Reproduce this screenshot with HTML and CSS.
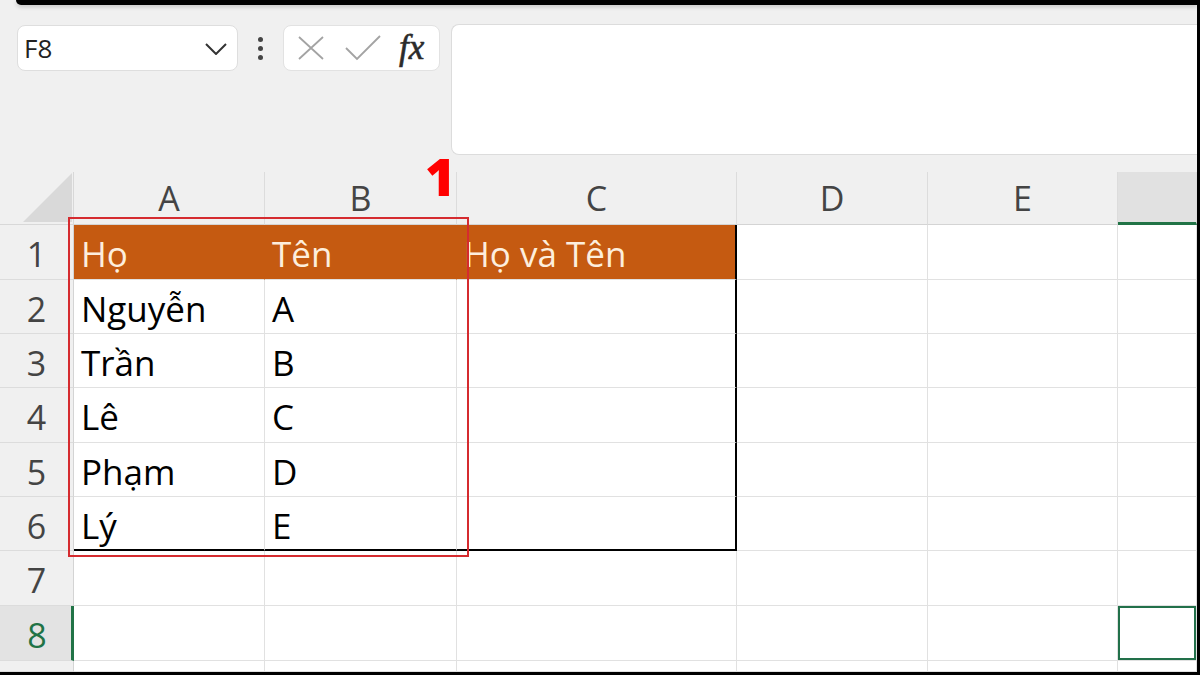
FILE: index.html
```html
<!DOCTYPE html>
<html lang="vi">
<head>
<meta charset="utf-8">
<title>Excel</title>
<link rel="stylesheet" href="styles.css">
</head>
<body>
<div class="frame">
  <div class="topbar"></div>
  <div class="toolbar">
    <div class="namebox">
      <span class="nb-text">F8</span>
      <svg class="chev" width="22" height="12" viewBox="0 0 22 12"><path d="M1 1 L11 11 L21 1" fill="none" stroke="#333" stroke-width="2"/></svg>
    </div>
    <div class="dots"><span></span><span></span><span></span></div>
    <div class="fxbox">
      <svg class="ico" width="28" height="26" viewBox="0 0 28 26"><path d="M2 2 L26 24 M26 2 L2 24" stroke="#a3a3a3" stroke-width="1.8" fill="none"/></svg>
      <svg class="ico" width="36" height="28" viewBox="0 0 36 28"><path d="M1 14 L12 25 L35 2" stroke="#a3a3a3" stroke-width="1.8" fill="none"/></svg>
      <span class="fx">fx</span>
    </div>
    <div class="formula"></div>
  </div>
  <div class="sheet">
    <!-- header row -->
    <div class="corner"><svg width="74" height="53" viewBox="0 0 74 53"><polygon points="23,50 72,50 72,1" fill="#d9d9d9"/></svg></div>
    <div class="ch">A</div><div class="ch">B</div><div class="ch">C</div><div class="ch">D</div><div class="ch">E</div><div class="ch chs"></div>
    <!-- row 1 -->
    <div class="rh">1</div>
    <div class="c hd">Họ</div><div class="c hd">Tên</div><div class="c hd tr">Họ và Tên</div><div class="c"></div><div class="c"></div><div class="c"></div>
    <!-- row 2 -->
    <div class="rh">2</div>
    <div class="c">Nguyễn</div><div class="c">A</div><div class="c tr"></div><div class="c"></div><div class="c"></div><div class="c"></div>
    <!-- row 3 -->
    <div class="rh">3</div>
    <div class="c">Trần</div><div class="c">B</div><div class="c tr"></div><div class="c"></div><div class="c"></div><div class="c"></div>
    <!-- row 4 -->
    <div class="rh">4</div>
    <div class="c">Lê</div><div class="c">C</div><div class="c tr"></div><div class="c"></div><div class="c"></div><div class="c"></div>
    <!-- row 5 -->
    <div class="rh">5</div>
    <div class="c">Phạm</div><div class="c">D</div><div class="c tr"></div><div class="c"></div><div class="c"></div><div class="c"></div>
    <!-- row 6 -->
    <div class="rh">6</div>
    <div class="c tb">Lý</div><div class="c tb">E</div><div class="c tb tr"></div><div class="c"></div><div class="c"></div><div class="c"></div>
    <!-- row 7 -->
    <div class="rh">7</div>
    <div class="c"></div><div class="c"></div><div class="c"></div><div class="c"></div><div class="c"></div><div class="c"></div>
    <!-- row 8 -->
    <div class="rh rhs">8</div>
    <div class="c"></div><div class="c"></div><div class="c"></div><div class="c"></div><div class="c"></div><div class="c sel"></div>
    <!-- row 9 (partial) -->
    <div class="rh"></div>
    <div class="c"></div><div class="c"></div><div class="c"></div><div class="c"></div><div class="c"></div><div class="c"></div>

    <div class="mark-box"></div>
    <div class="mark-num">1</div>
  </div>
</div>
</body>
</html>
```

FILE: styles.css
```css
* { box-sizing: border-box; }
html, body { margin: 0; padding: 0; }
body {
  width: 1200px;
  height: 675px;
  overflow: hidden;
  background: #f0f0f0;
  font-family: "Open Sans", "Noto Sans", sans-serif;
}
.frame {
  width: 1200px;
  height: 675px;
  display: flex;
  flex-direction: column;
  border-right: 3px solid #000;
  border-bottom: 3px solid #000;
  background: #f0f0f0;
}
.topbar {
  height: 5px;
  margin-left: 16px;
  background: #000;
  border-bottom-left-radius: 12px;
  box-shadow: 0 2px 4px rgba(0,0,0,0.18);
  flex: none;
}
.toolbar {
  height: 167px;
  flex: none;
  display: flex;
  align-items: flex-start;
  padding-top: 19px;
  padding-left: 17px;
}
.namebox {
  width: 221px;
  height: 46px;
  margin-top: 1px;
  background: #fff;
  border: 1px solid #dedede;
  border-radius: 8px;
  display: flex;
  align-items: center;
  justify-content: space-between;
  padding: 0 10px 0 6px;
}
.nb-text { font-size: 26px; color: #222; }
.chev { margin-top: 2px; }
.dots {
  width: 45px;
  height: 46px;
  margin-top: 1px;
  display: flex;
  flex-direction: column;
  align-items: center;
  justify-content: center;
  gap: 4px;
}
.dots span { width: 5px; height: 5px; border-radius: 50%; background: #444; }
.fxbox {
  width: 157px;
  height: 46px;
  margin-top: 1px;
  background: #fff;
  border: 1px solid #e2e2e2;
  border-radius: 8px;
  display: flex;
  align-items: center;
  padding-left: 13px;
  gap: 20px;
}
.fxbox .ico { flex: none; }
.fx {
  font-family: "Liberation Serif", "DejaVu Serif", serif;
  font-style: italic;
  font-size: 35px;
  line-height: 40px;
  color: #2b2b2b;
  -webkit-text-stroke: 0.6px #2b2b2b;
  margin-left: -2px;
  margin-top: 0;
}
.formula {
  flex: 1;
  height: 131px;
  margin-left: 11px;
  background: #fff;
  border: 1px solid #dcdcdc;
  border-right: none;
  border-radius: 8px 0 0 8px;
}
.sheet {
  position: relative;
  flex: 1;
  display: grid;
  grid-template-columns: 74px 191px 192px 280px 191px 190px 1fr;
  grid-template-rows: 53px 55px 54px 54px 55px 54px 54px 55px 55px 1fr;
  background: #fff;
}
.corner {
  background: #f0f0f0;
  border-right: 1px solid #d8d8d8;
  border-bottom: 1px solid #d8d8d8;
}
.corner svg { display: block; }
.ch {
  background: #f0f0f0;
  border-right: 1px solid #dcdcdc;
  border-bottom: 1px solid #d4d4d4;
  text-align: center;
  font-size: 34px;
  line-height: 53px;
  color: #444;
}
.chs { background: #e1e1e1; border-bottom: 3px solid #217346; }
.rh {
  background: #f0f0f0;
  border-right: 1px solid #d4d4d4;
  border-bottom: 1px solid #dcdcdc;
  text-align: center;
  font-size: 34px;
  line-height: 48px;
  padding-top: 5px;
  color: #444;
}
.rhs { background: #e3e3e3; color: #217346; border-right: 3px solid #217346; padding-left: 3px; }
.c {
  border-right: 1px solid #e1e1e1;
  border-bottom: 1px solid #e1e1e1;
  font-size: 35px;
  line-height: 48px;
  padding: 5px 0 0 7px;
  color: #000;
  white-space: nowrap;
}
.hd { background: #c55a11; color: #fdeedd; border-right-color: #c55a11; }
.tr { border-right: 2px solid #000; }
.tb { border-bottom: 2px solid #000; }
.sel { box-shadow: inset 0 0 0 2px #22704a; }
.mark-box {
  position: absolute;
  left: 68px;
  top: 45px;
  width: 401px;
  height: 340px;
  border: 2px solid #d52b2f;
}
.mark-num {
  position: absolute;
  left: 425px;
  top: -22px;
  font-family: "Open Sans", sans-serif;
  font-weight: 800;
  font-size: 52px;
  line-height: 52px;
  color: #f00;
}
```
